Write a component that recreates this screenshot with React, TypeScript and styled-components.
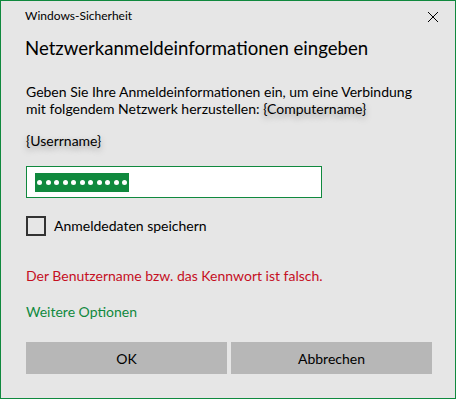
import React from "react";
import styled, { createGlobalStyle } from "styled-components";

const Global = createGlobalStyle`
  html, body { margin: 0; padding: 0; background: #e6e6e6; }
  * { box-sizing: border-box; }
`;

const FONT = `Lato, "Noto Sans", sans-serif`;

const Window = styled.div`
  width: 456px;
  height: 399px;
  border: 1px solid #10893e;
  background: #e6e6e6;
  font-family: ${FONT};
  color: #000;
  display: flex;
  flex-direction: column;
`;

const TitleBar = styled.div`
  display: flex;
  align-items: center;
  justify-content: space-between;
  height: 30px;
  padding: 0 16px 0 24px;
  font-size: 12px;
  line-height: 30px;
  color: #000;
`;

const CloseBox = styled.div`
  width: 12px;
  height: 12px;
  margin-top: 2px;
  display: flex;
`;

const Body = styled.div`
  display: flex;
  flex-direction: column;
  padding: 0 24px 0 23px;
`;

const Heading = styled.h1`
  margin: 4px 0 0 1px;
  font-size: 18.6px;
  font-weight: 400;
  line-height: 26px;
  white-space: nowrap;
`;

const Text = styled.div<{ $top: number; $color?: string }>`
  margin: ${(p) => p.$top}px 0 0 2px;
  font-size: 14px;
  line-height: 17px;
  white-space: nowrap;
  color: ${(p) => p.$color ?? "#000"};
`;

const Placeholder = styled.span`
  text-shadow: 0 3px 6px rgba(0, 0, 0, 0.35);
`;

const Input = styled.div`
  margin: 17px 0 0 2px;
  width: 296px;
  height: 32px;
  background: #fff;
  border: 1.5px solid #10893e;
  display: flex;
  align-items: center;
  padding-left: 8px;
`;

const Selection = styled.div`
  background: #10893e;
  height: 19px;
  width: 94px;
  display: flex;
  align-items: center;
  gap: 3.5px;
  padding-left: 2px;
`;

const Dot = styled.span`
  width: 5px;
  height: 5px;
  border-radius: 50%;
  background: #fff;
`;

const CheckRow = styled.label`
  margin: 18px 0 0 2px;
  display: flex;
  align-items: center;
  gap: 8px;
  font-size: 14px;
  line-height: 20px;
`;

const Box = styled.span`
  width: 20px;
  height: 20px;
  border: 2px solid #333;
`;

const Buttons = styled.div`
  margin: 22px 0 0 2px;
  display: grid;
  grid-template-columns: 201px 201px;
  gap: 4px;
`;

const Button = styled.div`
  height: 32px;
  background: #b7b7b7;
  display: flex;
  align-items: center;
  justify-content: center;
  font-size: 14px;
`;

export default function App() {
  return (
    <>
      <Global />
      <Window>
        <TitleBar>
          <span>Windows-Sicherheit</span>
          <CloseBox>
            <svg width="12" height="12" viewBox="0 0 12 12">
              <path d="M1 1 L11 11 M11 1 L1 11" stroke="#000" strokeWidth="1" fill="none" />
            </svg>
          </CloseBox>
        </TitleBar>
        <Body>
          <Heading>Netzwerkanmeldeinformationen eingeben</Heading>
          <Text $top={22}>
            Geben Sie Ihre Anmeldeinformationen ein, um eine Verbindung
            <br />
            mit folgendem Netzwerk herzustellen: <Placeholder>{"{Computername}"}</Placeholder>
          </Text>
          <Text $top={15}>
            <Placeholder>{"{Userrname}"}</Placeholder>
          </Text>
          <Input>
            <Selection>
              {Array.from({ length: 11 }).map((_, i) => (
                <Dot key={i} />
              ))}
            </Selection>
          </Input>
          <CheckRow>
            <Box />
            Anmeldedaten speichern
          </CheckRow>
          <Text $top={31} $color="#c50f1f">
            Der Benutzername bzw. das Kennwort ist falsch.
          </Text>
          <Text $top={19} $color="#10893e">
            Weitere Optionen
          </Text>
          <Buttons>
            <Button>OK</Button>
            <Button>Abbrechen</Button>
          </Buttons>
        </Body>
      </Window>
    </>
  );
}
